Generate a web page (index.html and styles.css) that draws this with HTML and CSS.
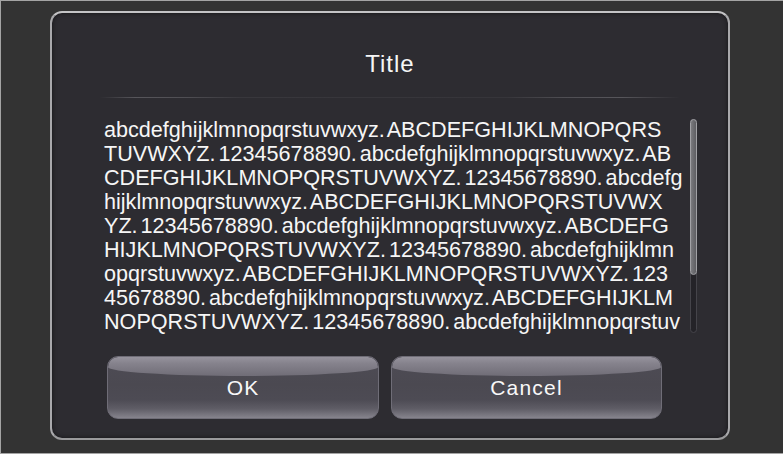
FILE: index.html
```html
<!DOCTYPE html>
<html lang="en">
<head>
<meta charset="utf-8">
<title>Dialog</title>
<link rel="stylesheet" href="styles.css">
</head>
<body>
<div class="screen">
  <div class="dialog">
    <div class="title">Title</div>
    <div class="separator"></div>
    <div class="content">
      <p class="message">abcdefghijklmnopqrstuvwxyz. ABCDEFGHIJKLMNOPQRS<br>TUVWXYZ. 12345678890. abcdefghijklmnopqrstuvwxyz. AB<br>CDEFGHIJKLMNOPQRSTUVWXYZ. 12345678890. abcdefg<br>hijklmnopqrstuvwxyz. ABCDEFGHIJKLMNOPQRSTUVWX<br>YZ. 12345678890. abcdefghijklmnopqrstuvwxyz. ABCDEFG<br>HIJKLMNOPQRSTUVWXYZ. 12345678890. abcdefghijklmn<br>opqrstuvwxyz. ABCDEFGHIJKLMNOPQRSTUVWXYZ. 123<br>45678890. abcdefghijklmnopqrstuvwxyz. ABCDEFGHIJKLM<br>NOPQRSTUVWXYZ. 12345678890. abcdefghijklmnopqrstuv</p>
      <div class="scrollbar"><div class="thumb"></div></div>
    </div>
    <div class="buttons">
      <button class="btn">OK</button>
      <button class="btn">Cancel</button>
    </div>
  </div>
</div>
</body>
</html>
```
FILE: styles.css
```css
html, body {
  margin: 0;
  padding: 0;
  background: #333333;
}
.screen {
  width: 783px;
  height: 454px;
  box-sizing: border-box;
  border-top: 1px solid #a4a4a4;
  border-left: 1px solid #a4a4a4;
  border-bottom: 1px solid #a4a4a4;
  padding: 10px 53px 13px 49px;
  display: flex;
  font-family: "Liberation Sans", Arial, sans-serif;
  color: #f6f6f6;
}
.dialog {
  width: 680px;
  height: 429px;
  box-sizing: border-box;
  border: 2px solid #a9a9ac;
  border-top-color: #c4c4c6;
  border-bottom-color: #9a9a9c;
  border-radius: 12px;
  background: #2d2c31;
  box-shadow: inset 0 0 5px rgba(0,0,0,0.55);
  display: flex;
  flex-direction: column;
}
.title {
  margin-top: 39px;
  height: 24px;
  line-height: 24px;
  font-size: 24px;
  letter-spacing: 1px;
  text-align: center;
}
.separator {
  margin: 21px 0 0 48px;
  width: 580px;
  height: 1px;
  background: linear-gradient(to right,
    rgba(90,90,95,0) 0%,
    #57565b 6%,
    #4f4e53 15%,
    #38373c 24%,
    #36353a 70%,
    #4f4e53 80%,
    #57565b 90%,
    rgba(90,90,95,0) 100%);
}
.content {
  margin-top: 20px;
  padding: 0 31px 0 52px;
  display: flex;
  gap: 8px;
  height: 216px;
}
.message {
  flex: 1;
  margin: 0;
  font-size: 21.6px;
  line-height: 24px;
  letter-spacing: 0;
  word-spacing: -3px;
  white-space: nowrap;
}
.scrollbar {
  flex: none;
  width: 7px;
  margin-top: 1px;
  height: 214px;
  box-sizing: border-box;
  border: 1px solid #45444a;
  border-radius: 4px;
  background: #242328;
  display: flex;
  flex-direction: column;
}
.thumb {
  height: 154px;
  margin: -1px;
  border: 1px solid #a2a2a6;
  border-radius: 4px;
  background: linear-gradient(to right, #7a7a7e, #5e5e62);
}
.buttons {
  margin-top: 22px;
  padding-left: 55px;
  display: flex;
  gap: 12px;
}
.btn {
  position: relative;
  overflow: hidden;
  width: 272px;
  height: 63px;
  border: 1px solid #6f6d77;
  border-radius: 11px;
  background: linear-gradient(to bottom,
    #4e4c55 0%,
    #4b4951 45%,
    #4d4b54 70%,
    #5f5d66 85%,
    #86848d 100%);
  color: #f8f8f8;
  font-family: "Liberation Sans", Arial, sans-serif;
  font-size: 21px;
  letter-spacing: 1.2px;
  padding: 0;
}
.btn::before {
  content: "";
  position: absolute;
  top: 0;
  left: 0;
  right: 0;
  height: 19px;
  border-radius: 10px 10px 50% 50% / 10px 10px 9px 9px;
  background: linear-gradient(to bottom, #96939d 0%, #85828c 35%, #706d77 100%);
}
.btn + .btn {
  width: 271px;
}
```
